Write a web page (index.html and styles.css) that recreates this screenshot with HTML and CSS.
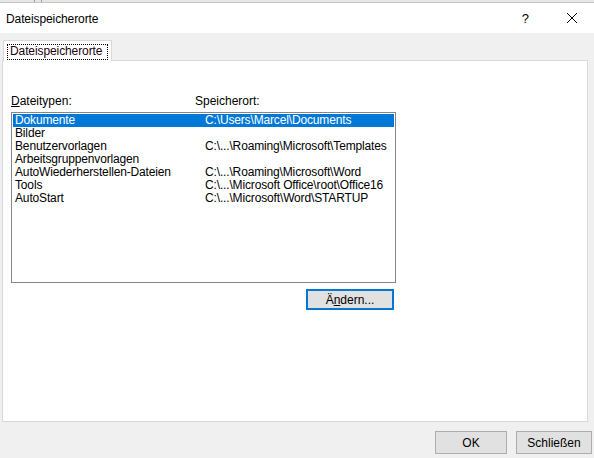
FILE: index.html
```html
<!DOCTYPE html>
<html lang="de">
<head>
  <meta charset="UTF-8" />
  <title>Dateispeicherorte</title>
  <link rel="stylesheet" href="styles.css">
</head>
<body>
  <div class="dialog">
    <div class="frame-top">
      <span class="tick"></span><span class="tick"></span>
    </div>
    <div class="titlebar">
      <span class="title">Dateispeicherorte</span>
      <span class="help">?</span>
      <svg class="close" width="12" height="12" viewBox="0 0 12 12">
        <path d="M1 1 L11 11 M11 1 L1 11" stroke="#000" stroke-width="1" fill="none" />
      </svg>
    </div>

    <div class="content">
      <div class="tabs">
        <div class="tab active"><span class="focus">Dateispeicherorte</span></div>
      </div>
      <div class="panel">
        <div class="headers">
          <span class="col1"><u>D</u>ateitypen:</span>
          <span class="col2">Speicherort:</span>
        </div>
        <div class="listbox">
          <div class="row selected"><span class="col1">Dokumente</span><span class="col2">C:\Users\Marcel\Documents</span></div>
          <div class="row"><span class="col1">Bilder</span><span class="col2"></span></div>
          <div class="row"><span class="col1">Benutzervorlagen</span><span class="col2">C:\...\Roaming\Microsoft\Templates</span></div>
          <div class="row"><span class="col1">Arbeitsgruppenvorlagen</span><span class="col2"></span></div>
          <div class="row"><span class="col1">AutoWiederherstellen-Dateien</span><span class="col2">C:\...\Roaming\Microsoft\Word</span></div>
          <div class="row"><span class="col1">Tools</span><span class="col2">C:\...\Microsoft Office\root\Office16</span></div>
          <div class="row"><span class="col1">AutoStart</span><span class="col2">C:\...\Microsoft\Word\STARTUP</span></div>
        </div>
        <div class="panel-actions">
          <button class="btn default">Ä<u>n</u>dern...</button>
        </div>
      </div>
      <div class="footer">
        <button class="btn ok">OK</button>
        <button class="btn close-btn">Schließen</button>
      </div>
    </div>
  </div>
</body>
</html>
```

FILE: styles.css
```css
* {
  box-sizing: border-box;
}
body {
  margin: 0;
  width: 594px;
  height: 458px;
  overflow: hidden;
  font-family: "Liberation Sans", Arial, sans-serif;
  font-size: 12px;
  color: #000;
  background: #f0f0f0;
}
.dialog {
  display: flex;
  flex-direction: column;
  height: 458px;
}
.frame-top {
  height: 3px;
  background: #e6e6e6;
  border-bottom: 1px solid #c4c4c4;
  display: flex;
  padding-left: 34px;
  gap: 6px;
}
.tick {
  width: 1px;
  background: #9a9a9a;
}
.titlebar {
  height: 30px;
  background: #fff;
  display: flex;
  align-items: center;
  padding-left: 6px;
}
.title {
  flex: 1;
  font-size: 12px;
  letter-spacing: -0.1px;
  padding-top: 1px;
}
.help {
  font-size: 13px;
  margin-right: 37px;
}
.close {
  margin-right: 16px;
}

.content {
  flex: 1;
  display: flex;
  flex-direction: column;
  padding: 7px 6px 0 2px;
}
.tabs {
  display: flex;
  height: 21px;
  padding-left: 1px;
}
.tab {
  background: #fff;
  border: 1px solid #d9d9d9;
  border-bottom: none;
  padding: 3px 3px 0 3px;
  width: 109px;
  position: relative;
  z-index: 1;
}
.focus {
  display: block;
  border: 1px dotted #000;
  padding: 0 2px 1px 2px;
  line-height: 13px;
  letter-spacing: -0.1px;
  color: #1a0010;
}
.panel {
  background: #fff;
  border: 1px solid #d9d9d9;
  margin-top: -1px;
  height: 362px;
  padding: 33px 7px 0 8px;
}
.headers {
  display: flex;
  height: 18px;
  line-height: 14px;
}
.headers .col1 {
  width: 184px;
}
.listbox {
  width: 385px;
  height: 171px;
  border: 1px solid #828790;
  padding: 1px;
}
.row {
  display: flex;
  height: 13px;
  line-height: 13px;
  padding-left: 2px;
  white-space: nowrap;
  letter-spacing: -0.15px;
}
.row .col1 {
  width: 190px;
}
.row.selected {
  background: #0078d7;
  color: #fff;
}
.panel-actions {
  display: flex;
  padding-left: 295px;
  margin-top: 6px;
}
.btn {
  font-family: inherit;
  font-size: 12px;
  background: #e1e1e1;
  border: 1px solid #adadad;
  color: #000;
  padding: 0;
  height: 23px;
}
.btn.default {
  width: 88px;
  height: 21px;
  border: 2px solid #0078d7;
}
.footer {
  display: flex;
  justify-content: flex-end;
  gap: 9px;
  padding-top: 9px;
}
.btn.ok {
  width: 72px;
}
.btn.close-btn {
  width: 76px;
  margin-right: -4px;
}
```
